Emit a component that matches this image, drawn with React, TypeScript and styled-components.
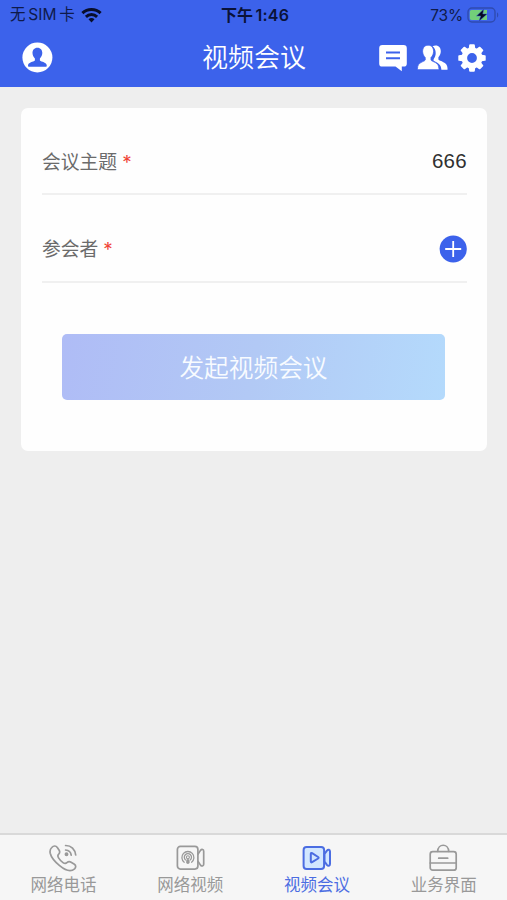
import React from "react";
import styled, { createGlobalStyle } from "styled-components";

const BLUE = "#3c62eb";

const GlobalStyle = createGlobalStyle`
  * { box-sizing: border-box; }
  body {
    margin: 0;
    background: #eeeeee;
    font-family: Inter, "Noto Sans CJK SC", sans-serif;
  }
  button { font: inherit; border: 0; padding: 0; background: none; }
  svg { display: block; flex: none; }
`;

const Screen = styled.div`
  display: flex;
  flex-direction: column;
  height: 900px;
  width: 100%;
  overflow: hidden;
  background: #eeeeee;
`;

const Header = styled.header`
  height: 87px;
  flex: none;
  background: ${BLUE};
`;

const StatusBar = styled.div`
  display: grid;
  grid-template-columns: 1fr auto 1fr;
  align-items: center;
  height: 29px;
  padding: 0 7px;
  padding-left: 10px;
  font-size: 16px;
  line-height: 29px;
  color: #0f1a4a;
  white-space: nowrap;
`;

const StatusGroup = styled.div<{ $end?: boolean }>`
  display: flex;
  align-items: center;
  gap: ${(p) => (p.$end ? 4 : 6)}px;
  justify-content: ${(p) => (p.$end ? "flex-end" : "flex-start")};
`;

const Carrier = styled.span`
  font-size: 15.5px;
  line-height: 30px;
  word-spacing: -1.5px;
`;

const Clock = styled.span`
  font-size: 16px;
  line-height: 30px;
  font-weight: 600;
  letter-spacing: 0.2px;
  word-spacing: -2px;
  color: #0a1238;
`;

const Percent = styled.span`
  font-size: 15.5px;
  letter-spacing: -0.2px;
`;

const NavBar = styled.div`
  display: grid;
  grid-template-columns: 1fr auto 1fr;
  align-items: center;
  height: 57px;
  padding: 0 21px 0 22px;
`;

const Title = styled.h1`
  margin: 0;
  font-size: 26px;
  line-height: 57px;
  font-weight: 350;
  color: #fff;
`;

const Actions = styled.div`
  display: flex;
  justify-content: flex-end;
  gap: 10px;
`;

const IconButton = styled.button`
  display: flex;
  align-items: center;
`;

const Main = styled.main`
  flex: 1;
  padding: 20px 20px 0 21px;
`;

const Card = styled.section`
  height: 343px;
  margin-top: 1px;
  padding: 0 20px 0 21px;
  border-radius: 7px;
  background: #fefefe;
`;

const Field = styled.div<{ $first?: boolean }>`
  display: flex;
  align-items: center;
  justify-content: space-between;
  height: ${(p) => (p.$first ? 87 : 88)}px;
  padding-top: 21px;
  border-bottom: 2px solid #f0f0f0;
`;

const Label = styled.span`
  padding-top: 3px;
  font-size: 18.8px;
  line-height: 28px;
  color: #6b6b6b;
`;

const Required = styled.span`
  margin-left: 5px;
  color: #f04438;
`;

const Value = styled.span`
  font-family: "Liberation Sans", sans-serif;
  font-size: 20.5px;
  line-height: 28px;
  letter-spacing: 0.3px;
  color: #303030;
`;

const StartButton = styled.button`
  display: block;
  width: 383px;
  height: 66px;
  margin: 51px 0 0 20px;
  padding-top: 2px;
  border-radius: 5px;
  background: linear-gradient(100deg, #afbcf6 0%, #b2c9f5 50%, #b4dafc 100%);
  color: #f8fbff;
  font-size: 24.7px;
  font-weight: 350;
  line-height: 64px;
`;

const TabBar = styled.nav`
  display: grid;
  grid-template-columns: repeat(4, 1fr);
  flex: none;
  height: 67px;
  border-top: 2px solid #d9d9d9;
  background: #f6f6f6;
`;

const Tab = styled.button<{ $active?: boolean }>`
  display: flex;
  flex-direction: column;
  align-items: center;
  padding-top: 8px;
  color: ${(p) => (p.$active ? "#4b6de2" : "#999")};
`;

const TabLabel = styled.span`
  font-size: 16.5px;
  line-height: 25px;
`;

const Wifi = () => (
  <svg width="21" height="16" viewBox="0 0 21 16" fill="none" stroke="#080e2b" strokeWidth="3">
    <path d="M1.4 6.1C6.5 1.2 14.5 1.2 19.6 6.1" />
    <path d="M4.9 9.8c3.2-3 8-3 11.2 0" />
    <path d="M7.5 12.2c1.8-1.5 4.2-1.5 6 0L10.5 15.4z" fill="#080e2b" stroke="none" />
  </svg>
);

const Battery = () => (
  <svg width="33" height="16" viewBox="0 0 33 16">
    <rect x="1" y="1" width="27" height="14" rx="4" fill="none" stroke="#2f4bb0" strokeWidth="1.4" />
    <path d="M4.5 3H20v10H4.5A1.7 1.7 0 0 1 2.800 11.300V4.700A1.700 1.700 0 0 1 4.500 3z" fill="#72cf79" />
    <path d="M30 5.600c1.700.5 1.700 4.300 0 4.800z" fill="#2f4bb0" />
    <path d="M16.800 2 9.500 9h4.200l-1.800 5.300 8.300-7.400h-4.400z" fill="#050a20" stroke={BLUE} strokeWidth=".5" />
  </svg>
);

const Profile = () => (
  <svg width="31" height="31" viewBox="0 0 31 31">
    <circle cx="15.400" cy="15.500" r="15" fill="#fff" />
    <path
      d="M15.400 5.700c-3.200 0-4.900 2.400-4.900 5.400 0 2.100 1 4.200 2.400 5.400v2c-1.400 1.400-6.900 1.700-6.900 5.200 0 .7.5 1 1.100 1h16.600c.6 0 1.100-.3 1.100-1 0-3.500-5.500-3.800-6.900-5.200v-2c1.400-1.200 2.400-3.300 2.400-5.400 0-3-1.700-5.400-4.900-5.400z"
      fill={BLUE}
    />
  </svg>
);

const Message = () => (
  <svg width="28" height="28" viewBox="0 0 28 28">
    <path d="M3.400 1h21.200A3.200 3.200 0 0 1 27.800 4.200v15.200a3.200 3.200 0 0 1-3.200 3.200h-1.800v4.700l-6.300-4.700H3.400A3.200 3.200 0 0 1 .2 19.400V4.200A3.200 3.200 0 0 1 3.400 1z" fill="#fff" />
    <path d="M7 8.500h14M7 14.200h14" stroke={BLUE} strokeWidth="2.100" />
  </svg>
);

const People = () => (
  <svg width="31" height="28" viewBox="0 0 31 28" fill="#fff">
    <path d="M15.500 2.300c1-.6 2-.8 3.100-.8 3.400 0 5.200 2.600 5.200 5.800 0 2.200-1 4.600-2.400 6v2.200c1.200 1.800 9.100 2.400 9.100 8.500v1.700h-6.100c-.2-5.300-3.900-7.300-7.800-9v-1.500c1.400-1.700 2.100-4 2.100-6.200 0-2.700-1-5.200-3.200-6.700z" />
    <path d="M11.100 1.200C7.500 1.200 5.600 3.900 5.600 7.300c0 2.400 1.100 4.900 2.600 6.200v2.600c-1.300 1.900-7.700 2-7.700 8.200v1.400h21.400v-1.400c0-6.200-6.600-6.300-7.900-8.200v-2.600c1.500-1.300 2.600-3.800 2.600-6.200 0-3.400-1.900-6.100-5.500-6.100z" stroke={BLUE} strokeWidth=".8" />
  </svg>
);

const teeth = [0, 45, 90, 135, 180, 225, 270, 315];

const Gear = () => (
  <svg width="28" height="28" viewBox="0 0 28 28">
    <g fill="#fff">
      {teeth.map((angle) => (
        <path key={angle} d="M10.500 6 11.200 1q.1-.7.9-.7h3.800q.8 0 .9.7l.7 5z" transform={`rotate(${angle} 14 14)`} />
      ))}
      <circle cx="14" cy="14" r="7.700" fill="none" stroke="#fff" strokeWidth="5.600" />
    </g>
  </svg>
);

const Plus = () => (
  <svg width="28" height="28" viewBox="0 0 28 28">
    <circle cx="14.200" cy="14" r="13.600" fill={BLUE} />
    <path d="M14.200 6v16M6.200 14h16" stroke="#fff" strokeWidth="1.800" />
  </svg>
);

const lineProps = {
  width: 32,
  height: 30,
  viewBox: "0 0 32 30",
  fill: "none",
  stroke: "currentColor",
  strokeWidth: 1.7,
  strokeLinecap: "round" as const,
  strokeLinejoin: "round" as const,
};

const PhoneIcon = () => (
  <svg {...lineProps} viewBox="-0.8 0 32 30">
    <path d="M4 4.500c1.700-1.900 4.200-2 5.500-.1l1.700 2.600c1.200 1.900.8 3.200-.5 4.400-1.100 1.100-.9 2 .2 3.700a16 16 0 0 0 4.300 4.500c1.700 1.200 2.700 1.200 3.900.1 1.300-1.100 2.700-1.300 4.200-.4l3.300 2c1.700 1.200 1.700 3.100.2 4.500-4.200 3.700-10.300.7-15-3.200C7.200 18.800 3.400 14.300 2.400 10.200c-.5-2.400 0-4.200 1.600-5.700z" />
    <path d="M17.800 2.500c5.600-.1 9.500 4 10.100 9.500M17.800 7c3.200.2 5.200 2.100 5.600 5.200" />
    <circle cx="18.700" cy="11.300" r="1.100" fill="currentColor" />
  </svg>
);

const WebcamIcon = () => (
  <svg {...lineProps} viewBox="-0.6 0 32 30">
    <rect x="2.800" y="3.400" width="20.500" height="22.700" rx="3" />
    <path d="m23.500 11 2.400-3.600c1.300-1.600 3.200-1 3.200.8v13.100c0 1.800-1.900 2.300-3.200.8l-2.400-3.600" />
    <path d="M9.600 19.200a6 6 0 1 1 7.400 0M10.900 16.900a3.600 3.600 0 1 1 4.800 0" strokeWidth="1.300" />
    <circle cx="13.300" cy="14.300" r="1.500" strokeWidth="1.100" />
    <path d="M13.300 17.700v1.600" strokeWidth="3.400" />
  </svg>
);

const MeetingIcon = () => (
  <svg {...lineProps} strokeWidth={2}>
    <rect x="2.600" y="3.900" width="20.500" height="22" rx="3" fill="#d2e7ff" />
    <path d="m23.500 11 2.400-3.400c1.300-1.500 3.100-.9 3.100.8v12.700c0 1.700-1.800 2.300-3.100.8l-2.400-3.400z" fill="#d2e7ff" />
    <path d="M9.800 10.800v7.800c0 .9.600 1 1.300.6l6-3.700c.7-.5.700-1 0-1.500l-6-3.800c-.7-.4-1.300-.3-1.300.6z" />
  </svg>
);

const BriefcaseIcon = () => (
  <svg {...lineProps} viewBox="0.8 0.6 32 30">
    <rect x="3" y="9.300" width="26" height="18.500" rx="2.500" />
    <path d="M10.500 9C10.800.8 21.200.8 21.500 9M3 20.600h26M11.500 15.800h9" />
  </svg>
);

const tabs = [
  { label: "网络电话", Icon: PhoneIcon },
  { label: "网络视频", Icon: WebcamIcon },
  { label: "视频会议", Icon: MeetingIcon, active: true },
  { label: "业务界面", Icon: BriefcaseIcon },
];

export default function App() {
  return (
    <>
      <GlobalStyle />
      <Screen>
        <Header>
          <StatusBar>
            <StatusGroup>
              <Carrier>无 SIM 卡</Carrier>
              <Wifi />
            </StatusGroup>
            <Clock>下午 1:46</Clock>
            <StatusGroup $end>
              <Percent>73%</Percent>
              <Battery />
            </StatusGroup>
          </StatusBar>
          <NavBar>
            <IconButton aria-label="个人资料"><Profile /></IconButton>
            <Title>视频会议</Title>
            <Actions>
              <IconButton aria-label="消息"><Message /></IconButton>
              <IconButton aria-label="联系人"><People /></IconButton>
              <IconButton aria-label="设置"><Gear /></IconButton>
            </Actions>
          </NavBar>
        </Header>
        <Main>
          <Card>
            <Field $first>
              <Label>会议主题<Required>*</Required></Label>
              <Value>666</Value>
            </Field>
            <Field>
              <Label>参会者<Required>*</Required></Label>
              <IconButton aria-label="添加参会者"><Plus /></IconButton>
            </Field>
            <StartButton>发起视频会议</StartButton>
          </Card>
        </Main>
        <TabBar>
          {tabs.map(({ label, Icon, active }) => (
            <Tab key={label} $active={active}>
              <Icon />
              <TabLabel>{label}</TabLabel>
            </Tab>
          ))}
        </TabBar>
      </Screen>
    </>
  );
}
